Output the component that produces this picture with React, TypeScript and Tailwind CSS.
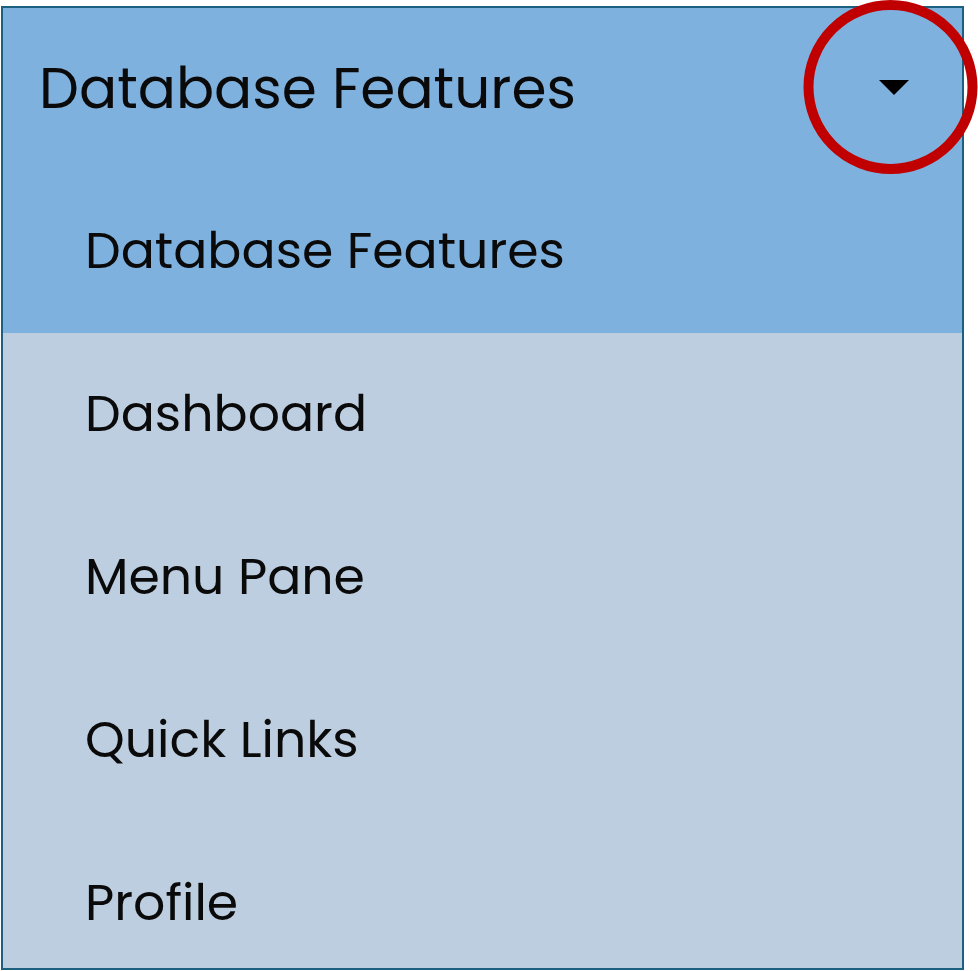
import React from "react";

const items = ["Dashboard", "Menu Pane", "Quick Links", "Profile"];

const font = { fontFamily: 'Poppins, "Open Sans", sans-serif' };

export default function App() {
  return (
    <div className="min-h-[971px] w-[978px] bg-white pt-[6px] pl-[1px]" style={font}>
      <div className="relative w-[963px] h-[964px] overflow-hidden border-2 border-[#1d5f7e] bg-[#bdcee1] text-[#0a0a0a]">
        <div className="bg-[#7fb1df]">
          <div className="flex h-[162px] items-center justify-between pl-[36px] pr-[53px]">
            <span className="text-[56.5px] leading-none">Database Features</span>
            <svg width="30" height="16" viewBox="0 0 30 16" className="mb-[2px]">
              <path d="M0 0 H30 L15 15 Z" fill="#000" />
            </svg>
          </div>
          <div className="flex h-[163px] items-center pl-[82px]">
            <span className="text-[50.5px] leading-none">Database Features</span>
          </div>
        </div>
        {items.map((t) => (
          <div key={t} className="flex h-[163px] shrink-0 items-center pl-[82px]">
            <span className="text-[50.5px] leading-none">{t}</span>
          </div>
        ))}
      </div>
      <svg
        className="absolute left-[803px] top-0"
        width="175"
        height="175"
        viewBox="0 0 175 175"
      >
        <circle cx="87.5" cy="87" r="82" fill="none" stroke="#c00000" strokeWidth="10" />
      </svg>
    </div>
  );
}
